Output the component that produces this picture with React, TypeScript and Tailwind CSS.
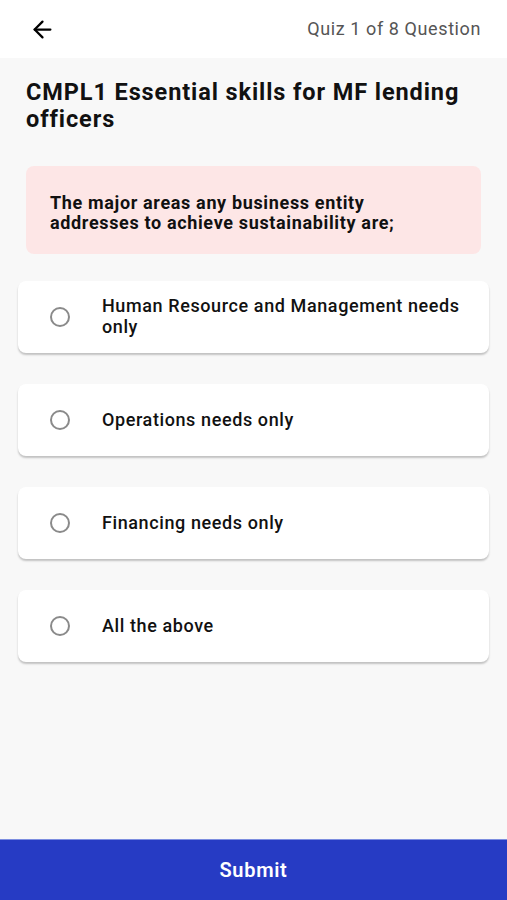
import React from "react";
import { ArrowLeft } from "lucide-react";

const options = [
    "Human Resource and Management needs only",
    "Operations needs only",
    "Financing needs only",
    "All the above",
];

export default function App() {
    const [selected, setSelected] = React.useState<number | null>(null);

    return (
        <div className="flex flex-col h-[900px] w-full bg-[#f8f8f8] font-['Roboto',sans-serif] text-[#111]">
            {/* Header */}
            <div className="flex items-center justify-between h-[58px] bg-white pl-[29px] pr-[26px]">
                <ArrowLeft size={27} strokeWidth={2} className="text-black" />
                <span className="text-[18px] tracking-[0.6px] text-[#555] -mt-[2px]">Quiz 1 of 8 Question</span>
            </div>

            {/* Body */}
            <div className="flex-1 flex flex-col px-[18px] pt-[21px]">
                <h1 className="px-2 text-[23.5px] leading-[27px] tracking-[0.9px] font-bold text-[#111]">
                    CMPL1 Essential skills for MF lending officers
                </h1>

                <div className="mx-2 mt-[33px] rounded-lg bg-[#fde6e6] pl-6 pr-[40px] pt-[27px] pb-[21px]">
                    <p className="text-[18px] leading-[20px] tracking-[0.65px] font-bold text-[#111]">
                        The major areas any business entity addresses to achieve sustainability are;
                    </p>
                </div>

                <div className="mt-[27px] flex flex-col gap-[31px]">
                    {options.map((opt, i) => (
                        <button
                            key={opt}
                            onClick={() => setSelected(i)}
                            className="flex items-center h-[72px] w-full rounded-lg bg-white pl-[32px] pr-4 text-left shadow-[0_2px_2px_rgba(0,0,0,0.22)]"
                        >
                            <span className="flex items-center justify-center w-[20px] h-[20px] shrink-0 rounded-full border-2 border-[#8a8a8a]">
                                {selected === i && <span className="w-[10px] h-[10px] rounded-full bg-[#273cc4]" />}
                            </span>
                            <span className="ml-[32px] -mt-[2px] text-[18px] leading-[21px] tracking-[0.6px] font-medium text-[#111]">{opt}</span>
                        </button>
                    ))}
                </div>
            </div>

            {/* Footer */}
            <button className="h-[61px] w-full bg-[#263bc4] border-t border-[#7d8ee0] text-white text-[20px] tracking-[0.7px] font-semibold">
                Submit
            </button>
        </div>
    );
}
